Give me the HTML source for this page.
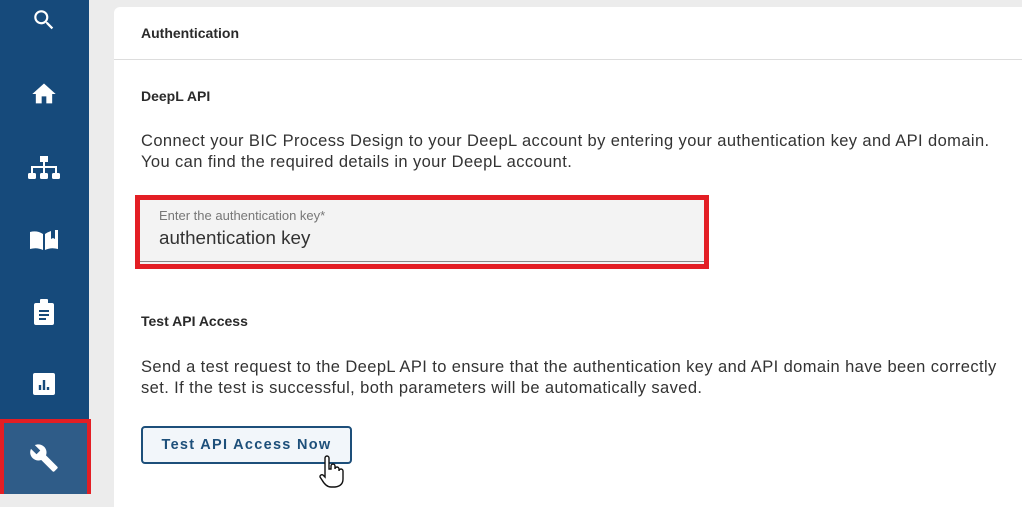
<!DOCTYPE html>
<html><head><meta charset="utf-8"><style>
*{margin:0;padding:0;box-sizing:border-box}
body{width:1022px;height:494px;overflow:hidden;background:#ececec;font-family:"Liberation Sans",sans-serif;position:relative;color:#333}
#side{position:absolute;left:0;top:0;width:89px;height:494px;background:#164a7b}
.ic{position:absolute;left:44px;transform:translate(-50%,-50%)}
#act{position:absolute;left:0;top:419px;width:91px;height:75px;background:#2f5c88;border:4px solid #e31e24;border-bottom:none}
#card{position:absolute;left:114px;top:7px;width:920px;height:500px;background:#fff;border-radius:6px 0 0 0}
.t{position:absolute;left:141px;white-space:nowrap}
h4{font-size:14px;font-weight:bold;color:#2a2a2a}
p{font-size:16.5px;letter-spacing:0.4px;line-height:21px;color:#333}
</style></head><body>
<div id="side">
<svg class="ic" style="top:20px" width="26" height="26" viewBox="0 0 24 24"><path fill="#fff" d="M15.5 14h-.79l-.28-.27A6.47 6.47 0 0 0 16 9.5 6.5 6.5 0 1 0 9.5 16c1.61 0 3.09-.59 4.23-1.57l.27.28v.79l5 4.99L20.49 19zm-6 0C7.01 14 5 11.99 5 9.5S7.01 5 9.5 5 14 7.01 14 9.5 11.99 14 9.5 14z"/></svg>
<svg class="ic" style="top:94px" width="28" height="28" viewBox="0 0 24 24"><path d="M10 20v-6h4v6h5v-8h3L12 3 2 12h3v8z" fill="#fff"/></svg>
<svg class="ic" style="top:168px" width="34" height="26" viewBox="0 0 34 26"><rect x="13" y="1" width="8" height="6" fill="#fff"/><path d="M17 7v5M5 18v-6h24v6M17 12v6" stroke="#fff" stroke-width="2" fill="none"/><rect x="1" y="18" width="8" height="6" rx="1.5" fill="#fff"/><rect x="13" y="18" width="8" height="6" rx="1.5" fill="#fff"/><rect x="25" y="18" width="8" height="6" rx="1.5" fill="#fff"/></svg>
<svg class="ic" style="top:240px" width="32" height="24" viewBox="0 0 32 24"><path d="M2 4q7-2 13 2v16q-6-3-13-1z" fill="#fff"/><path d="M17 6q3-2 6-3v8l2-1 2 1V2h3v19q-7-2-13 1z" fill="#fff"/></svg>
<svg class="ic" style="top:312px" width="24" height="28" viewBox="0 0 24 28"><rect x="2" y="5" width="20" height="22" rx="2" fill="#fff"/><rect x="8" y="1" width="8" height="6" rx="1" fill="#fff"/><path d="M7 13h10M7 17h10M7 21h7" stroke="#164a7b" stroke-width="2"/></svg>
<svg class="ic" style="top:384px" width="24" height="24" viewBox="0 0 24 24"><rect x="1" y="1" width="22" height="22" rx="2" fill="#fff"/><path d="M8 18v-5M12 18V8M16 18v-3" stroke="#164a7b" stroke-width="2.4"/></svg>
</div>
<div id="act"></div>
<svg class="ic" style="top:458px" width="30" height="30" viewBox="0 0 24 24"><path fill="#fff" d="M22.7 19l-9.1-9.1c.9-2.3.4-5-1.5-6.9-2-2-5-2.4-7.4-1.3L9 6 6 9 1.6 4.7C.4 7.1.9 10.1 2.9 12.1c1.9 1.9 4.6 2.4 6.9 1.5l9.1 9.1c.4.4 1 .4 1.4 0l2.3-2.3c.5-.4.5-1.1.1-1.4z"/></svg>
<div id="card"></div>
<div style="position:absolute;left:114px;top:59px;width:908px;height:1px;background:#ddd"></div>
<h4 class="t" style="top:25px">Authentication</h4>
<h4 class="t" style="top:88px">DeepL API</h4>
<p class="t" style="top:131px">Connect your BIC Process Design to your DeepL account by entering your authentication key and API domain.<br>You can find the required details in your DeepL account.</p>
<div style="position:absolute;left:135px;top:195px;width:574px;height:74px;border:5px solid #e31e24;background:#f3f3f3"></div>
<div style="position:absolute;left:140px;top:261px;width:564px;height:1px;background:#888"></div>
<div class="t" style="left:159px;top:208px;font-size:13px;color:#777">Enter the authentication key*</div>
<div class="t" style="left:159px;top:227px;font-size:18.8px;color:#333">authentication key</div>
<h4 class="t" style="top:313px">Test API Access</h4>
<p class="t" style="top:357px">Send a test request to the DeepL API to ensure that the authentication key and API domain have been correctly<br>set. If the test is successful, both parameters will be automatically saved.</p>
<div style="position:absolute;left:141px;top:426px;width:211px;height:38px;border:2px solid #1d4f7a;border-radius:4px;background:#f2f6fa;color:#1d4f7a;font-size:14.5px;font-weight:bold;letter-spacing:1.3px;text-align:center;line-height:34px">Test API Access Now</div>
<svg style="position:absolute;left:318px;top:455px" width="28" height="34" viewBox="0 0 28 34"><path d="M7 3a2 2 0 0 1 4 0v11l2 0v-3a2 2 0 0 1 4 0v3a2 2 0 0 1 4 0v2a2 2 0 0 1 4 0v8q0 7-8 8h-4q-5 0-9-7l-2-3a2 2 0 0 1 3-2l2 2z" fill="#fff" stroke="#111" stroke-width="1.4"/></svg>
</body></html>
